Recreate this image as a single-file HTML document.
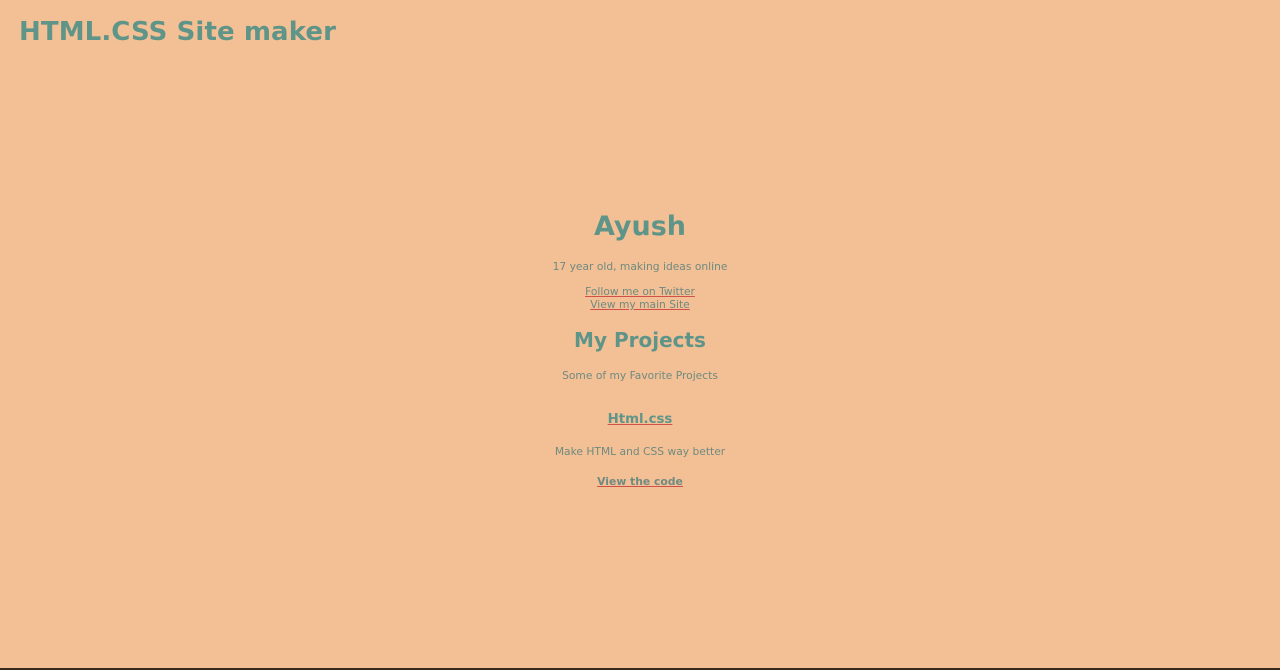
<!DOCTYPE html>
<html><head><meta charset="utf-8"><style>
html,body{margin:0;padding:0;}
body{width:1280px;height:670px;background:#f3c095;font-family:"DejaVu Sans","Liberation Sans",sans-serif;color:#5f9488;position:relative;overflow:hidden;}
.t{position:absolute;white-space:nowrap;}
.c{left:0;width:1280px;text-align:center;}
a{color:#6f8a80;text-decoration:underline;text-decoration-color:#d0504a;}
.bar{position:absolute;left:0;top:668px;width:1280px;height:2px;background:#3a2a1c;}
</style></head><body>
<div class="t" style="left:19px;top:17px;font-size:26px;font-weight:bold;letter-spacing:0.1px;">HTML.CSS Site maker</div>
<div class="t c" style="top:211px;font-size:27px;font-weight:bold;">Ayush</div>
<div class="t c" style="top:260px;font-size:10.7px;color:#6f8a80;">17 year old, making ideas online</div>
<div class="t c" style="top:285px;font-size:10.7px;line-height:13px;"><a>Follow me on Twitter</a><br><a>View my main Site</a></div>
<div class="t c" style="top:328px;font-size:20px;font-weight:bold;">My Projects</div>
<div class="t c" style="top:369px;font-size:10.7px;color:#6f8a80;">Some of my Favorite Projects</div>
<div class="t c" style="top:412px;font-size:13.3px;font-weight:bold;"><a style="color:#5f9488">Html.css</a></div>
<div class="t c" style="top:445px;font-size:10.7px;color:#6f8a80;">Make HTML and CSS way better</div>
<div class="t c" style="top:475px;font-size:10.8px;font-weight:bold;"><a>View the code</a></div>
<div class="bar"></div>
</body></html>
